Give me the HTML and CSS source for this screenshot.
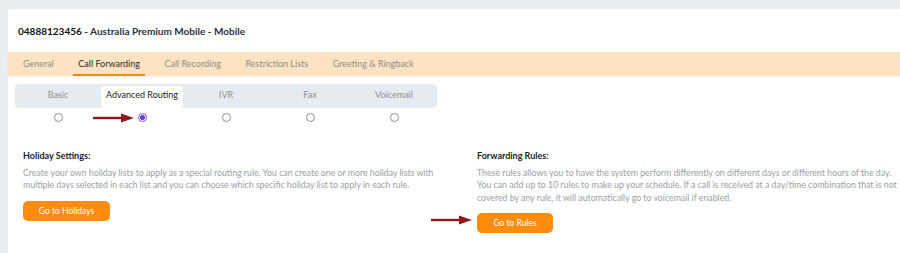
FILE: index.html
```html
<!DOCTYPE html>
<html>
<head>
<meta charset="utf-8">
<link rel="stylesheet" href="styles.css">
</head>
<body>
<div class="card">
  <div class="title"><span class="num">04888123456</span> - Australia Premium Mobile - Mobile</div>
  <div class="tabs">
    <div class="tab">General</div>
    <div class="tab active">Call Forwarding</div>
    <div class="tab">Call Recording</div>
    <div class="tab">Restriction Lists</div>
    <div class="tab">Greeting &amp; Ringback</div>
  </div>
  <div class="modes">
    <div class="seg">
      <div class="seg-item">Basic</div>
      <div class="seg-item active">Advanced Routing</div>
      <div class="seg-item">IVR</div>
      <div class="seg-item">Fax</div>
      <div class="seg-item">Voicemail</div>
    </div>
    <div class="radios">
      <div class="radio-cell"><span class="radio"></span></div>
      <div class="radio-cell">
        <svg class="arrow arrow-radio" width="42" height="10" viewBox="0 0 42 10"><path d="M0 5H30" stroke="#8e1b1b" stroke-width="2.4"/><path d="M28 0.5L41 5L28 9.5Z" fill="#8e1b1b"/></svg>
        <span class="radio checked"></span>
      </div>
      <div class="radio-cell"><span class="radio"></span></div>
      <div class="radio-cell"><span class="radio"></span></div>
      <div class="radio-cell"><span class="radio"></span></div>
    </div>
  </div>
  <div class="cols">
    <div class="col">
      <div class="h">Holiday Settings:</div>
      <p class="desc">Create your own holiday lists to apply as a special routing rule. You can create one or more holiday lists with multiple days selected in each list and you can choose which specific holiday list to apply in each rule.</p>
      <div class="btn-row"><span class="btn btn-hol">Go to Holidays</span></div>
    </div>
    <div class="col">
      <div class="h">Forwarding Rules:</div>
      <p class="desc">These rules allows you to have the system perform differently on different days or different hours of the day. You can add up to 10 rules to make up your schedule. If a call is received at a day/time combination that is not covered by any rule, it will automatically go to voicemail if enabled.</p>
      <div class="btn-row">
        <svg class="arrow arrow-btn" width="42" height="10" viewBox="0 0 42 10"><path d="M0 5H30" stroke="#8e1b1b" stroke-width="2.4"/><path d="M28 0.5L41 5L28 9.5Z" fill="#8e1b1b"/></svg>
        <span class="btn btn-rules">Go to Rules</span>
      </div>
    </div>
  </div>
</div>
</body>
</html>
```
FILE: styles.css
```css
html, body {
  margin: 0;
  padding: 0;
  background: #e9edf1;
  font-family: Lato, "Noto Sans", sans-serif;
  height: 253px;
  overflow: hidden;
}
.card {
  margin: 9px 0 0 8px;
  background: #fff;
  height: 244px;
  border-top-left-radius: 3px;
}
.title {
  padding: 16px 0 0 10px;
  height: 27px;
  font-size: 10px;
  font-weight: 700;
  color: #2b2f3f;
  line-height: 13px;
}
.title .num {
  color: #111;
}
.tabs {
  display: flex;
  background: #fee3c2;
  height: 24px;
  padding-left: 15px;
  gap: 24.5px;
  box-shadow: 0 1px 1px rgba(0,0,0,0.06);
}
.tab {
  font-size: 9px;
  color: #8c8c8c;
  line-height: 23px;
  border-bottom: 2px solid transparent;
  height: 22px;
}
.tab.active {
  color: #2a2a2a;
  border-bottom-color: #f08a16;
  margin: 0 -5px;
  padding: 0 5px;
}
.modes {
  padding: 8px 0 0 7px;
}
.seg {
  display: flex;
  width: 420px;
  background: #e6ebf0;
  border-radius: 4px;
  height: 24px;
  padding: 0 1px;
}
.seg-item {
  width: 84px;
  text-align: center;
  font-size: 9px;
  color: #8a8f96;
  line-height: 22px;
}
.seg-item.active {
  background: #fff;
  color: #222;
  border-radius: 4px;
  margin: 2px 1px 0;
  width: 82px;
  line-height: 18px;
  height: 22px;
  box-shadow: 0 0 1px rgba(0,0,0,0.08);
}
.radios {
  display: flex;
  padding: 5px 1px 0;
  width: 420px;
}
.radio-cell {
  width: 84px;
  display: flex;
  justify-content: center;
  position: relative;
  height: 10px;
}
.radio {
  width: 7px;
  height: 7px;
  border: 1px solid #8b8b8b;
  border-radius: 50%;
  background: #fff;
}
.radio.checked {
  border-color: #7b58d6;
  background: radial-gradient(circle, #6a3fd0 0 2.2px, #fff 2.7px);
}
.arrow {
  position: absolute;
}
.arrow-radio {
  left: -7px;
  top: -0.5px;
}
.cols {
  display: grid;
  grid-template-columns: 424px 424px;
  column-gap: 30px;
  padding: 27px 0 0 15px;
}
.h {
  font-size: 9px;
  font-weight: 700;
  color: #222;
  line-height: 12px;
}
.desc {
  margin: 5px 0 0;
  font-size: 8.75px;
  line-height: 12.4px;
  color: #9a9ea4;
}
.btn-row {
  margin-top: 6px;
  position: relative;
}
.btn {
  display: inline-block;
  background: #ff8c0c;
  color: #fff;
  font-size: 8.5px;
  border-radius: 5px;
  height: 20px;
  line-height: 20px;
  text-align: center;
}
.btn-hol { width: 87px; }
.btn-rules { width: 76px; }
.arrow-btn {
  left: -46px;
  top: 5px;
}
```
